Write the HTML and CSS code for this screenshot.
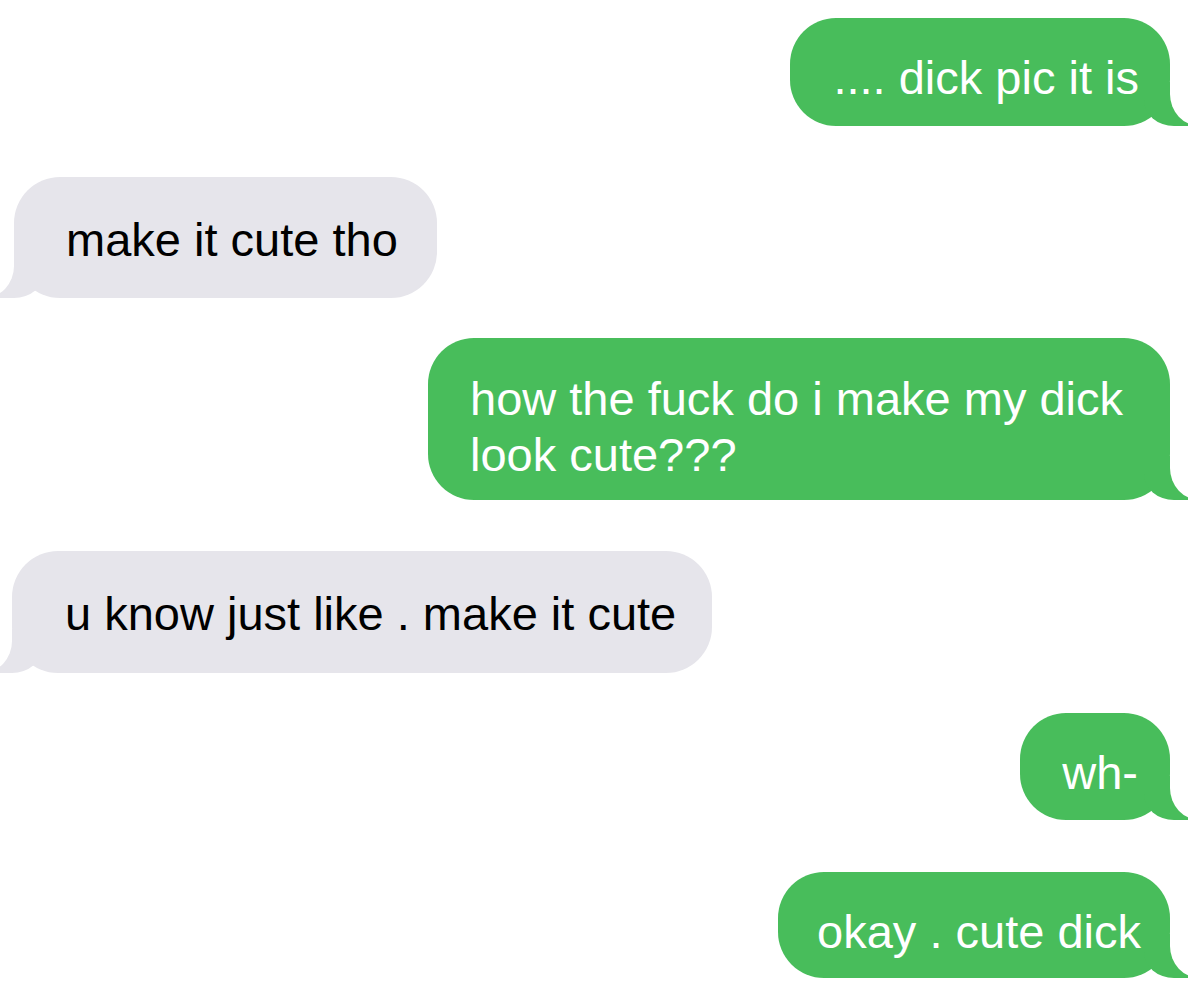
FILE: index.html
```html
<!DOCTYPE html>
<html lang="en">
<head>
<meta charset="utf-8">
<title>Messages</title>
<link rel="stylesheet" href="styles.css">
</head>
<body>
<div class="chat">
  <div class="bubble out b1">.... dick pic it is</div>
  <div class="bubble in b2">make it cute tho</div>
  <div class="bubble out b3">how the fuck do i make my dick look cute???</div>
  <div class="bubble in b4">u know just like . make it cute</div>
  <div class="bubble out b5">wh-</div>
  <div class="bubble out b6">okay . cute dick</div>
</div>
</body>
</html>
```
FILE: styles.css
```css
html, body {
  margin: 0;
  padding: 0;
  background: #ffffff;
}

.chat {
  width: 1200px;
  height: 992px;
  box-sizing: border-box;
  padding: 18px 30px 0 13px;
  display: flex;
  flex-direction: column;
  overflow: hidden;
  font-family: "Liberation Sans", Arial, sans-serif;
  font-size: 47px;
  line-height: 54px;
}

.bubble {
  position: relative;
  box-sizing: border-box;
  max-width: 742px;
  border-radius: 46px;
  white-space: normal;
}

.bubble.out {
  align-self: flex-end;
  background: #48bd5b;
  color: #ffffff;
}

.bubble.in {
  align-self: flex-start;
  background: #e6e5eb;
  color: #000000;
}

/* tails */
.bubble::before,
.bubble::after {
  content: "";
  position: absolute;
  bottom: 0;
  height: 44px;
}

.bubble.out::before {
  right: -18px;
  width: 44px;
  background: #48bd5b;
  border-bottom-left-radius: 30px 26px;
}

.bubble.out::after {
  right: -32px;
  width: 32px;
  background: #ffffff;
  border-bottom-left-radius: 30px 32px;
}

.bubble.in::before {
  left: -14px;
  width: 44px;
  background: #e6e5eb;
  border-bottom-right-radius: 30px 26px;
}

.bubble.in::after {
  left: -32px;
  width: 32px;
  background: #ffffff;
  border-bottom-right-radius: 30px 32px;
}

/* individual bubble metrics */
.b1 {
  padding: 33px 31px 21px 43px;
}

.b2 {
  margin-top: 51px;
  margin-left: 1px;
  padding: 36px 39px 31px 52px;
}

.b3 {
  margin-top: 40px;
  padding: 33px 44px 17px 42px;
  line-height: 56px;
}

.b4 {
  margin-top: 51px;
  margin-left: -1px;
  padding: 36px 36px 32px 53px;
}

.b5 {
  margin-top: 40px;
  padding: 33px 32px 20px 42px;
}

.b6 {
  margin-top: 52px;
  padding: 33px 29px 19px 39px;
}
```
